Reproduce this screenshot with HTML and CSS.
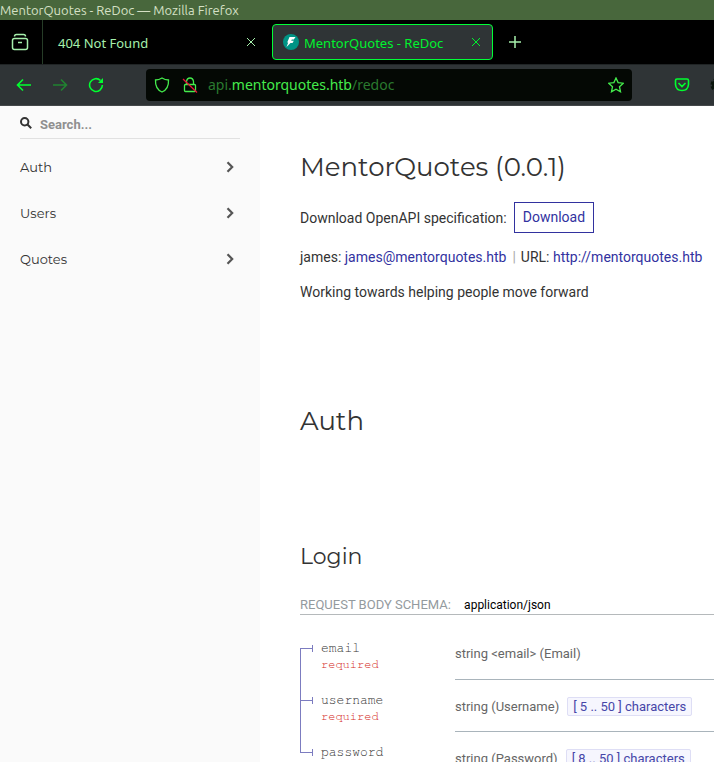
FILE: index.html
```html
<!DOCTYPE html>
<html lang="en">
<head>
<meta charset="utf-8">
<title>MentorQuotes - ReDoc</title>
<link rel="stylesheet" href="styles.css">
</head>
<body>
<div class="titlebar">MentorQuotes - ReDoc — Mozilla Firefox</div>
<div class="tabs">
  <button class="tabs-view" aria-label="View tabs">
    <svg width="18" height="18" viewBox="0 0 18 18"><path d="M3.500 3.500Q3.500 1.500 5.500 1.500H12.500Q14.500 1.500 14.500 3.500"/><rect x="1.500" y="5.500" width="15" height="11" rx="2"/><path d="M7 9.500H11"/></svg>
  </button>
  <div class="tab">
    <span class="tab-name">404 Not Found</span>
    <button class="close" aria-label="Close tab"><svg width="10" height="10" viewBox="0 0 10 10"><path d="M1 1L9 9M9 1L1 9"/></svg></button>
  </div>
  <div class="tab tab-active">
    <svg class="favicon" width="16" height="16" viewBox="0 0 16 16"><circle cx="8" cy="8" r="8" fill="#009485"/><path d="M6.500 3H12.500L10.800 5.500H8.800L8.200 6.800H10.800L9.500 9H7.500L3.500 13L5.200 8.500H4.200Z" fill="#fff"/></svg>
    <span class="tab-name">MentorQuotes - ReDoc</span>
    <button class="close" aria-label="Close tab"><svg width="10" height="10" viewBox="0 0 10 10"><path d="M1 1L9 9M9 1L1 9"/></svg></button>
  </div>
  <button class="new-tab" aria-label="New tab"><svg width="12" height="12" viewBox="0 0 12 12"><path d="M6 0V12M0 6H12"/></svg></button>
</div>
<div class="toolbar">
  <div class="nav">
    <button aria-label="Back"><svg width="16" height="16" viewBox="0 0 16 16"><path d="M15 8H2M7 2.500L1.500 8L7 13.500"/></svg></button>
    <button class="dim" aria-label="Forward"><svg width="16" height="16" viewBox="0 0 16 16"><path d="M1 8H14M9 2.500L14.500 8L9 13.500"/></svg></button>
    <button aria-label="Reload"><svg width="16" height="16" viewBox="0 0 16 16"><path d="M12.500 3.500A6.400 6.400 0 1 0 14.400 8"/><path d="M15 1V6H10Z" fill="currentColor" stroke="none"/></svg></button>
  </div>
  <div class="address">
    <svg width="16" height="16" viewBox="0 0 16 16"><path d="M8 1Q11 3 14.500 3Q15 12 8 15Q1 12 1.500 3Q5 3 8 1Z"/></svg>
    <svg class="lock" width="16" height="16" viewBox="0 0 16 16"><path d="M4.500 7V4.500Q5 1 8 1Q11 1 11.500 4.500V7"/><rect x="2.500" y="7.500" width="11" height="7" rx="1"/><path class="slash" d="M1 2L15 15.500"/></svg>
    <span class="url">api.<b>mentorquotes.htb</b>/redoc</span>
    <button class="star" aria-label="Bookmark"><svg width="16" height="16" viewBox="0 0 16 16"><path d="M8 1L10.100 5.600L15.300 6.200L11.500 9.700L12.500 14.800L8 12.300L3.500 14.800L4.500 9.700L.7 6.200L5.900 5.600Z"/></svg></button>
  </div>
  <button class="pocket" aria-label="Pocket"><svg width="16" height="16" viewBox="0 0 16 16"><path d="M3 2H13Q14.500 2 14.500 3.500V7.500Q14 13.500 8 13.500Q2 13.500 1.500 7.500V3.500Q1.500 2 3 2ZM4.500 6L8 9.500L11.500 6"/></svg></button>
  <button class="gear" aria-label="Extension"><svg width="16" height="16" viewBox="0 0 16 16"><circle cx="8" cy="8" r="6" stroke-width="3" stroke-dasharray="3 1.700"/><circle cx="8" cy="8" r="5" stroke-width="2"/></svg></button>
</div>
<div class="page">
  <nav class="sidebar">
    <label class="search">
      <svg width="12" height="12" viewBox="0 0 12 12"><circle cx="4.700" cy="4.700" r="3.700"/><path d="M7.500 7.500L11.200 11.200"/></svg>
      <input type="text" placeholder="Search..." aria-label="Search">
    </label>
    <a class="item" href="#auth">Auth<svg width="8" height="12" viewBox="0 0 8 12"><path d="M1.500 1.200L6.200 6L1.500 10.800"/></svg></a>
    <a class="item" href="#users">Users<svg width="8" height="12" viewBox="0 0 8 12"><path d="M1.500 1.200L6.200 6L1.500 10.800"/></svg></a>
    <a class="item" href="#quotes">Quotes<svg width="8" height="12" viewBox="0 0 8 12"><path d="M1.500 1.200L6.200 6L1.500 10.800"/></svg></a>
  </nav>
  <main class="content">
    <h1>MentorQuotes (0.0.1)</h1>
    <p class="spec">Download OpenAPI specification:<a class="download" href="#download">Download</a></p>
    <p class="contact">james: <a href="#mail">james@mentorquotes.htb</a><span class="bar">|</span>URL: <a href="#site">http://mentorquotes.htb</a></p>
    <p class="about">Working towards helping people move forward</p>
    <h2 class="section" id="auth">Auth</h2>
    <h2 class="operation">Login</h2>
    <h3>Request Body schema: <span class="mime">application/json</span></h3>
    <table class="fields">
      <tr><td class="key"><span class="name">email</span><span class="required">required</span></td><td class="type">string &lt;email&gt; (Email)</td></tr>
      <tr><td class="key"><span class="name">username</span><span class="required">required</span></td><td class="type">string (Username)<span class="limit">[ 5 .. 50 ] characters</span></td></tr>
      <tr><td class="key"><span class="name">password</span></td><td class="type">string (Password)<span class="limit">[ 8 .. 50 ] characters</span></td></tr>
    </table>
  </main>
</div>
</body>
</html>
```
FILE: styles.css
```css
* { box-sizing: border-box; }
body {
  margin: 0;
  height: 100vh;
  overflow: hidden;
  display: flex;
  flex-direction: column;
  background: #fff;
  font-family: Roboto, sans-serif;
  font-size: 14px;
  color: #333;
}
button { background: none; border: 0; padding: 0; color: inherit; display: flex; flex: none; }
a { color: #32329f; text-decoration: none; }
svg { fill: none; stroke: currentColor; flex: none; }

.titlebar {
  flex: none;
  height: 20px;
  line-height: 20px;
  background: #48673c;
  color: #d5e0c5;
  font-family: Ubuntu, "Noto Sans", sans-serif;
  font-size: 13px;
  white-space: nowrap;
}

.tabs {
  flex: none;
  display: flex;
  height: 44px;
  background: #000;
  color: #a6f0ac;
  font-family: "Noto Sans", sans-serif;
  font-size: 13px;
}
.tabs-view { width: 43px; align-items: center; justify-content: center; padding-right: 3px; border-right: 1px solid #263c27; }
.tabs-view svg { stroke-width: 1.5; }
.tab { display: flex; align-items: center; width: 224px; height: 36px; margin: 4px 0; padding: 0 11px 0 15px; white-space: nowrap; }
.tab-name { padding-top: 2px; }
.tab .close { margin-left: auto; }
.tab-active { width: 221px; margin-left: 5px; padding-left: 10px; border: 1px solid #00ff37; border-radius: 4px; background: #2f3436; color: #00f22f; }
.favicon { margin-right: 5px; stroke: none; }
.new-tab { margin-left: 16px; align-items: center; }
.new-tab svg { stroke-width: 1.5; }

.toolbar {
  flex: none;
  display: flex;
  align-items: center;
  height: 42px;
  overflow: hidden;
  background: #2f3436;
  border-top: 1px solid #202425;
  border-bottom: 1px solid #44484a;
  color: #00ff2f;
}
.nav { display: flex; gap: 20px; padding: 0 42px 0 16px; }
.nav svg { stroke-width: 1.6; }
.dim { color: #218331; }
.address { display: flex; flex: 1; align-items: center; height: 32px; padding: 0 8px; background: #040804; border-radius: 4px; color: #44ec4c; }
.address svg { stroke-width: 1.3; }
.lock { margin: 0 10px 0 12px; }
.lock .slash { stroke: #e8143c; }
.url { padding-bottom: 2px; color: #2a7a2f; font-family: "Noto Sans", sans-serif; font-size: 14px; white-space: nowrap; }
.url b { font-weight: 400; color: #44ec4c; }
.star { margin-left: auto; }
.pocket { margin: 0 20px 0 42px; }
.pocket svg { stroke-width: 1.6; }
.gear { margin-right: -12px; color: #0b160d; }

.page { display: flex; flex: 1; min-height: 0; }
.sidebar { flex: none; width: 260px; padding: 5px 20px; background: #fafafa; }
.search { display: flex; align-items: center; gap: 8px; height: 28px; margin-bottom: 5px; border-bottom: 1px solid #e1e1e1; }
.search svg { stroke-width: 2; margin-bottom: 3px; }
.search input { flex: 1; min-width: 0; padding: 0; border: 0; outline: 0; background: none; font: 700 13px Roboto, sans-serif; }
.search input::placeholder { color: #909090; opacity: 1; }
.item { display: flex; align-items: center; justify-content: space-between; height: 46px; padding-right: 6px; color: #333; font-family: Montserrat, Inter, sans-serif; font-size: 13px; }
.item svg { stroke: #555; stroke-width: 2.2; }

.content { flex: 1; min-width: 0; padding: 40px 0 0 40px; white-space: nowrap; }
h1, h2, h3, p { margin: 0; font-weight: 400; }
h1, h2 { font-family: Montserrat, Inter, sans-serif; }
h1, .section { font-size: 26px; line-height: 42px; }
.spec { display: flex; align-items: center; margin-top: 14px; }
.download { margin-left: 7px; padding: 0 8px; border: 1px solid #32329f; line-height: 29px; }
.contact, .about { margin-top: 14px; line-height: 21px; }
.bar { margin: 0 5px 0 6px; color: #aaa; }
.section { margin-top: 97px; }
.operation { margin-top: 97px; font-size: 22px; line-height: 36px; }
h3 { margin-top: 21px; border-bottom: 1px solid #b5b9bb; color: #939a9e; font-size: 13px; line-height: 18px; text-transform: uppercase; }
.mime { margin-left: 10px; color: #000; font-size: 12px; text-transform: none; }
.fields { width: 100%; margin-top: 12px; border-collapse: collapse; font-size: 13px; color: #666; }
.fields td { height: 52px; padding: 0; }
.key {
  position: relative;
  width: 155px;
  color: #333;
  font-family: "Nimbus Mono PS", FreeMono, "Liberation Mono", monospace;
  vertical-align: top;
}
.fields .key { padding: 14px 0 0 21px; }
.key::before { content: ""; position: absolute; left: 0; top: 0; height: 100%; border-left: 1px solid #7c7cc0; }
tr:first-child .key::before { top: 21px; height: auto; bottom: 0; }
tr:last-child .key::before { height: 21px; }
.key::after {
  content: "";
  position: absolute;
  left: 0;
  top: 18px;
  width: 12px;
  height: 7px;
  border-right: 1px solid #7c7cc0;
  background: linear-gradient(#7c7cc0, #7c7cc0) 0 3px / 100% 1px no-repeat;
}
.name { display: block; line-height: 16px; }
.required { display: block; color: #d41f1c; font-size: 12px; line-height: 15px; }
.fields .type { padding-top: 2px; border-bottom: 1px solid #a9b4bb; }
.limit { margin-left: 8px; padding: 1px 5px; border: 1px solid #dedef5; border-radius: 2px; background: #f6f6fe; color: #4646a8; }
```
